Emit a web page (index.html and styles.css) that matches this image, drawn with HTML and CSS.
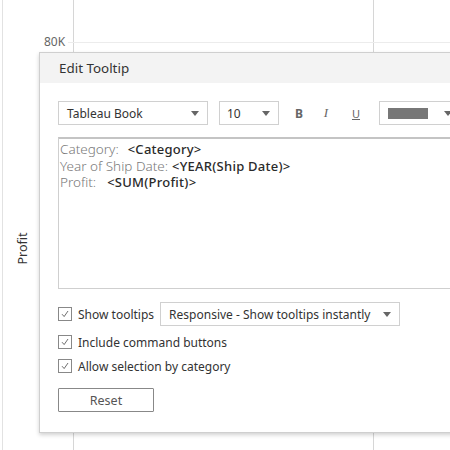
FILE: index.html
```html
<!DOCTYPE html>
<html>
<head>
<meta charset="utf-8">
<link rel="stylesheet" href="styles.css">
</head>
<body>
<div class="stage">
  <div class="chart">
    <div class="vline vl-left"></div>
    <div class="vline vl-axis"></div>
    <div class="vline vl-mid"></div>
    <div class="hgrid"></div>
    <div class="tick">80K</div>
    <div class="axis-title">Profit</div>
  </div>

  <div class="dialog">
    <div class="dlg-head">Edit Tooltip</div>
    <div class="dlg-body">
      <div class="toolbar">
        <div class="select sel-font"><span>Tableau Book</span><span class="caret"></span></div>
        <div class="select sel-size"><span>10</span><span class="caret"></span></div>
        <span class="fmt fmt-b">B</span>
        <span class="fmt fmt-i">I</span>
        <span class="fmt fmt-u">U</span>
        <div class="select sel-color"><span class="swatch"></span><span class="caret"></span></div>
      </div>
      <div class="editor">
        <div class="line"><span class="lbl">Category:</span><span class="fld f1">&lt;Category&gt;</span></div>
        <div class="line"><span class="lbl">Year of Ship Date:</span><span class="fld f2">&lt;YEAR(Ship Date)&gt;</span></div>
        <div class="line"><span class="lbl">Profit:</span><span class="fld f3">&lt;SUM(Profit)&gt;</span></div>
      </div>
      <div class="opt opt-first">
        <span class="cb"><svg viewBox="0 0 14 14" width="14" height="14"><path d="M3.5 7.2 L6 10 L10.5 3.5" fill="none" stroke="#555" stroke-width="1"/></svg></span>
        <span class="opt-text">Show tooltips</span>
        <div class="select sel-resp"><span>Responsive - Show tooltips instantly</span><span class="caret"></span></div>
      </div>
      <div class="opt opt-second">
        <span class="cb"><svg viewBox="0 0 14 14" width="14" height="14"><path d="M3.5 7.2 L6 10 L10.5 3.5" fill="none" stroke="#555" stroke-width="1"/></svg></span>
        <span class="opt-text">Include command buttons</span>
      </div>
      <div class="opt opt-third">
        <span class="cb"><svg viewBox="0 0 14 14" width="14" height="14"><path d="M3.5 7.2 L6 10 L10.5 3.5" fill="none" stroke="#555" stroke-width="1"/></svg></span>
        <span class="opt-text">Allow selection by category</span>
      </div>
      <button class="reset">Reset</button>
    </div>
  </div>
</div>
</body>
</html>
```

FILE: styles.css
```css
html, body {
  margin: 0;
  padding: 0;
  background: #fff;
}
.stage {
  position: relative;
  width: 450px;
  height: 450px;
  overflow: hidden;
  font-family: "Noto Sans", "Open Sans", sans-serif;
  color: #333;
}
.chart {
  position: absolute;
  inset: 0;
}
.vline {
  position: absolute;
  top: 0;
  bottom: 0;
  width: 1px;
  background: #d6d6d6;
}
.vl-left { left: 2px; background: #e2e2e2; }
.vl-axis { left: 73px; }
.vl-mid { left: 373px; }
.hgrid {
  position: absolute;
  left: 68px;
  right: 0;
  top: 42px;
  height: 1px;
  background: #ececec;
}
.tick {
  position: absolute;
  left: 44px;
  top: 35px;
  font-size: 12px;
  line-height: 14px;
  color: #666;
}
.axis-title {
  position: absolute;
  left: 14px;
  top: 240px;
  width: 16px;
  transform: rotate(-90deg);
  transform-origin: center;
  font-size: 12.5px;
  color: #333;
  display: flex;
  justify-content: center;
  white-space: nowrap;
}

.dialog {
  position: absolute;
  left: 39px;
  top: 52px;
  width: 440px;
  height: 379px;
  background: #fff;
  border: 1px solid #cfcfcf;
  box-shadow: 0 2px 4px rgba(0,0,0,0.18);
  display: flex;
  flex-direction: column;
}
.dlg-head {
  height: 30px;
  background: #f3f3f3;
  padding-left: 19px;
  display: flex;
  align-items: center;
  font-size: 13.4px;
  color: #333;
}
.dlg-body {
  padding: 18px 0 0 18px;
  display: flex;
  flex-direction: column;
  font-size: 12px;
}
.toolbar {
  display: flex;
  align-items: center;
  height: 24px;
}
.select {
  box-sizing: border-box;
  height: 24px;
  border: 1px solid #d0d0d0;
  background: #fff;
  display: flex;
  align-items: center;
  justify-content: space-between;
  padding: 0 8px 0 8px;
  color: #333;
  font-size: 12px;
}
.caret {
  width: 0;
  height: 0;
  border-left: 4px solid transparent;
  border-right: 4px solid transparent;
  border-top: 5px solid #666;
}
.sel-font { width: 150px; }
.sel-size { width: 60px; margin-left: 11px; padding-left: 7px; }
.fmt {
  font-size: 12px;
  color: #666;
  width: 10px;
  text-align: center;
}
.fmt-b { margin-left: 15px; font-weight: bold; }
.fmt-i { margin-left: 17px; font-style: italic; font-family: "Liberation Serif", serif; font-size: 13px; }
.fmt-u { margin-left: 20px; text-decoration: underline; font-size: 11px; }
.sel-color { width: 90px; margin-left: 18px; justify-content: flex-start; }
.swatch {
  width: 40px;
  height: 11px;
  background: #777;
}
.sel-color .caret { margin-left: 16px; }

.editor {
  box-sizing: border-box;
  margin-top: 12px;
  height: 152px;
  border-top: 2px solid #c4c4c4;
  border-left: 1px solid #cfcfcf;
  border-bottom: 1px solid #cfcfcf;
  padding: 2px 0 0 1px;
  font-size: 13.5px;
  line-height: 16.5px;
}
.lbl { color: #7a7a7a; font-weight: 300; }
.fld { color: #2a2a2a; font-weight: 460; font-size: 13px; letter-spacing: 0.25px; }
.f1 { margin-left: 9px; }
.f2 { margin-left: 4px; }
.f3 { margin-left: 11px; }

.opt {
  display: flex;
  align-items: center;
  height: 24px;
  font-size: 12px;
}
.opt-first { margin-top: 13px; }
.opt-second { margin-top: 4px; }
.opt-third { margin-top: 0; }
.cb {
  box-sizing: border-box;
  width: 14px;
  height: 14px;
  border: 1px solid #888;
  display: flex;
  align-items: center;
  justify-content: center;
  background: #fff;
}
.cb svg { display: block; }
.opt-text {
  margin-left: 6px;
  color: #333;
}
.sel-resp {
  width: 240px;
  margin-left: 6px;
  padding-left: 8px;
}
.reset {
  margin-top: 10px;
  width: 96px;
  height: 24px;
  box-sizing: border-box;
  border: 1px solid #888;
  border-radius: 1px;
  background: #fff;
  font-family: inherit;
  font-size: 12.5px;
  color: #555;
  padding: 0;
}
```
